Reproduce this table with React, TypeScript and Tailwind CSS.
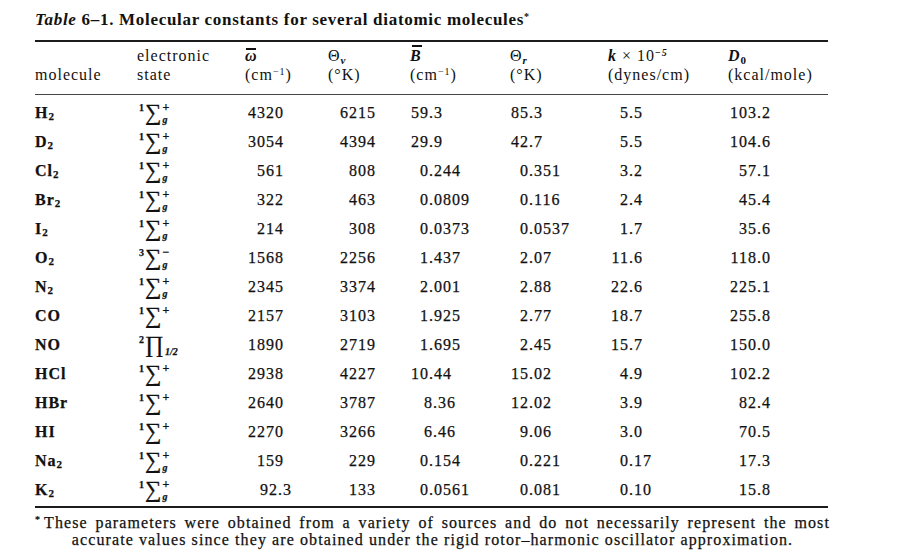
const serif = "font-['Liberation_Serif','Times_New_Roman',serif]";

type Row = {
  m: string;
  sub?: string;
  mult: string;
  sym: string;
  sup?: string;
  low?: string;
  w: string;
  tv: string;
  b: string;
  tr: string;
  k: string;
  d: string;
};

const rows: Row[] = [
  { m: 'H', sub: '2', mult: '1', sym: '∑', sup: '+', low: 'g', w: '4320', tv: '6215', b: '59.3', tr: '85.3', k: '5.5', d: '103.2' },
  { m: 'D', sub: '2', mult: '1', sym: '∑', sup: '+', low: 'g', w: '3054', tv: '4394', b: '29.9', tr: '42.7', k: '5.5', d: '104.6' },
  { m: 'Cl', sub: '2', mult: '1', sym: '∑', sup: '+', low: 'g', w: '561', tv: '808', b: '0.244', tr: '0.351', k: '3.2', d: '57.1' },
  { m: 'Br', sub: '2', mult: '1', sym: '∑', sup: '+', low: 'g', w: '322', tv: '463', b: '0.0809', tr: '0.116', k: '2.4', d: '45.4' },
  { m: 'I', sub: '2', mult: '1', sym: '∑', sup: '+', low: 'g', w: '214', tv: '308', b: '0.0373', tr: '0.0537', k: '1.7', d: '35.6' },
  { m: 'O', sub: '2', mult: '3', sym: '∑', sup: '−', low: 'g', w: '1568', tv: '2256', b: '1.437', tr: '2.07', k: '11.6', d: '118.0' },
  { m: 'N', sub: '2', mult: '1', sym: '∑', sup: '+', low: 'g', w: '2345', tv: '3374', b: '2.001', tr: '2.88', k: '22.6', d: '225.1' },
  { m: 'CO', mult: '1', sym: '∑', sup: '+', w: '2157', tv: '3103', b: '1.925', tr: '2.77', k: '18.7', d: '255.8' },
  { m: 'NO', mult: '2', sym: '∏', low: '1/2', w: '1890', tv: '2719', b: '1.695', tr: '2.45', k: '15.7', d: '150.0' },
  { m: 'HCl', mult: '1', sym: '∑', sup: '+', w: '2938', tv: '4227', b: '10.44', tr: '15.02', k: '4.9', d: '102.2' },
  { m: 'HBr', mult: '1', sym: '∑', sup: '+', w: '2640', tv: '3787', b: '8.36', tr: '12.02', k: '3.9', d: '82.4' },
  { m: 'HI', mult: '1', sym: '∑', sup: '+', w: '2270', tv: '3266', b: '6.46', tr: '9.06', k: '3.0', d: '70.5' },
  { m: 'Na', sub: '2', mult: '1', sym: '∑', sup: '+', low: 'g', w: '159', tv: '229', b: '0.154', tr: '0.221', k: '0.17', d: '17.3' },
  { m: 'K', sub: '2', mult: '1', sym: '∑', sup: '+', low: 'g', w: '92.3', tv: '133', b: '0.0561', tr: '0.081', k: '0.10', d: '15.8' },
];

const cols = 'grid grid-cols-[102px_108px_83px_82px_100px_98px_120px_100px]';
const ink = '[-webkit-text-stroke:0.25px_#111]';

// integer part right-aligned in a fixed box, fraction hangs to the right
function Dec({ v, box }: { v: string; box: string }) {
  const [i, f] = v.split('.');
  return (
    <span className="whitespace-nowrap">
      <span className={`inline-block text-right ${box}`}>{i}</span>
      {f !== undefined && <span>.{f}</span>}
    </span>
  );
}

function State({ r }: { r: Row }) {
  return (
    <span className="inline-flex items-stretch h-[22px] tracking-normal">
      <span className="text-[10px] leading-[10px] mt-[1px] mr-[1px] font-bold">{r.mult}</span>
      <span className="text-[23px] leading-[22px]">{r.sym}</span>
      <span className="inline-flex flex-col justify-between ml-[1px]">
        <span className="text-[12px] leading-[10px] h-[10px] font-bold">{r.sup ?? ''}</span>
        <span className="text-[10px] leading-[9px] h-[9px] italic font-bold">{r.low ?? ''}</span>
      </span>
    </span>
  );
}

function Rule({ h, c, extra }: { h: string; c: string; extra?: string }) {
  return <div className={`ml-[35px] w-[793px] ${h} ${c} ${extra ?? ''}`} />;
}

export default function App() {
  return (
    <div className={`w-[898px] h-[557px] overflow-hidden bg-white text-[#111] ${serif}`}>
      {/* caption */}
      <div className="pt-[10px] pl-[35px] text-[17px] leading-[20px] font-bold tracking-[0.7px]">
        <span className="italic">Table</span> 6–1. Molecular constants for several diatomic molecules
        <sup className="text-[10px]">*</sup>
      </div>

      <Rule h="h-[2px]" c="bg-[#1c1c1c]" extra="mt-[10px]" />

      {/* column heads */}
      <div className="ml-[35px] w-[793px] pt-[4px] pb-[10px] text-[16px] leading-[19px] tracking-[1px]">
        <div className={`${cols} h-[19px]`}>
          <span />
          <span>electronic</span>
          <span className="relative inline-block font-bold italic">
            ω
            <span className="absolute left-[1px] w-[10px] top-[2px] h-[1.5px] bg-[#111]" />
          </span>
          <span>
            Θ<sub className="text-[11px] font-bold italic">v</sub>
          </span>
          <span>
            <span className="relative inline-block font-bold italic">
              B
              <span className="absolute left-[2px] w-[10px] top-[-1px] h-[1.5px] bg-[#111]" />
            </span>
          </span>
          <span>
            Θ<sub className="text-[11px] font-bold italic">r</sub>
          </span>
          <span>
            <span className="italic font-bold">k</span> × 10
            <sup className="text-[10px] font-bold">−<span className="italic">5</span></sup>
          </span>
          <span>
            <span className="italic font-bold">D</span>
            <sub className="text-[11px] font-bold">0</sub>
          </span>
        </div>
        <div className={`${cols} h-[19px]`}>
          <span>molecule</span>
          <span>state</span>
          <span>
            (cm<sup className="text-[10px]">−1</sup>)
          </span>
          <span>(°K)</span>
          <span>
            (cm<sup className="text-[10px]">−1</sup>)
          </span>
          <span>(°K)</span>
          <span>(dynes/cm)</span>
          <span>(kcal/mole)</span>
        </div>
      </div>

      <Rule h="h-[1px]" c="bg-[#444]" />

      {/* body */}
      <div className={`ml-[35px] w-[793px] pt-[3px] text-[16px] tracking-[1px] ${ink}`}>
        {rows.map((r) => (
          <div key={r.m + (r.sub ?? '')} className={`${cols} h-[29px] items-center`}>
            <span className="font-bold">
              {r.m}
              {r.sub && <sub className="text-[11px]">{r.sub}</sub>}
            </span>
            <span className="pl-[2px] flex items-center">
              <State r={r} />
            </span>
            <span>
              <span className={`inline-block text-right ${r.w === '92.3' ? 'w-[47px]' : 'w-[39px]'}`}>{r.w}</span>
            </span>
            <span>
              <span className="inline-block w-[48px] text-right">{r.tv}</span>
            </span>
            <span className={r.m === 'HBr' || r.m === 'HI' ? 'pl-[4px]' : ''}>
              <Dec v={r.b} box="w-[19px]" />
            </span>
            <span>
              <Dec v={r.tr} box="w-[19px]" />
            </span>
            <span>
              <Dec v={r.k} box="w-[21px]" />
            </span>
            <span>
              <Dec v={r.d} box="w-[29px]" />
            </span>
          </div>
        ))}
      </div>

      <Rule h="h-[2px]" c="bg-[#1c1c1c]" extra="mt-[2px]" />

      {/* footnote */}
      <div className={`mt-[6px] ml-[35px] w-[795px] text-[16px] leading-[17px] tracking-[1.1px] ${ink}`}>
        <div className="text-justify [text-align-last:justify] whitespace-nowrap">
          <sup className="text-[10px] mr-[3px]">*</sup>These parameters were obtained from a variety of sources and do not necessarily represent the most
        </div>
        <div className="text-center whitespace-nowrap">
          accurate values since they are obtained under the rigid rotor–harmonic oscillator approximation.
        </div>
      </div>
    </div>
  );
}
